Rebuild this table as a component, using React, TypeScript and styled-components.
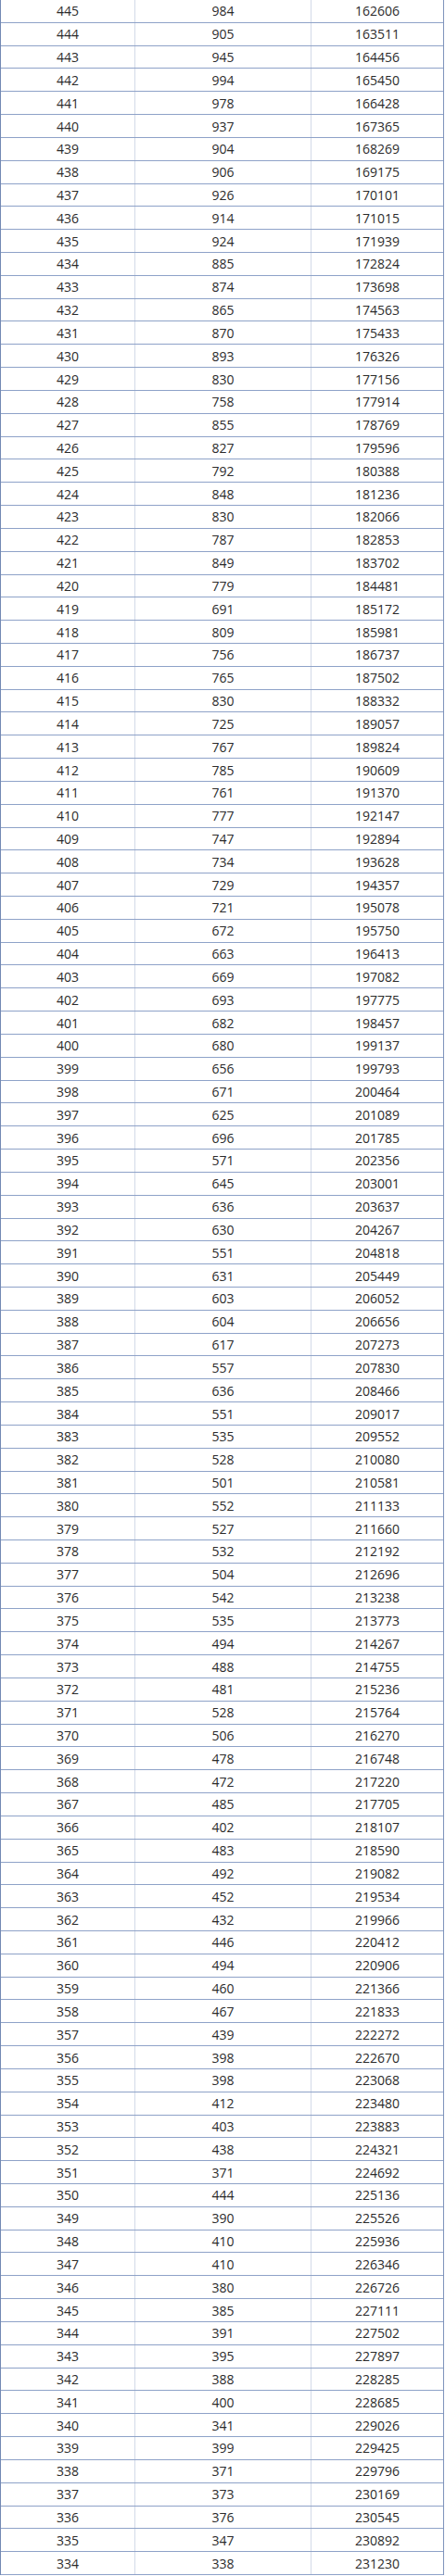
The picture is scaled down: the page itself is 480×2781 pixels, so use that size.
import React from 'react';
import styled, { createGlobalStyle } from 'styled-components';

const GlobalStyle = createGlobalStyle`
  html, body {
    margin: 0;
    padding: 0;
    background: #ffffff;
  }
`;

// admitted count per score, starting at 445 and going down to 334
const counts = [
  984, 905, 945, 994, 978, 937, 904, 906, 926, 914, 924, 885, 874, 865, 870, 893,
  830, 758, 855, 827, 792, 848, 830, 787, 849, 779, 691, 809, 756, 765, 830, 725,
  767, 785, 761, 777, 747, 734, 729, 721, 672, 663, 669, 693, 682, 680, 656, 671,
  625, 696, 571, 645, 636, 630, 551, 631, 603, 604, 617, 557, 636, 551, 535, 528,
  501, 552, 527, 532, 504, 542, 535, 494, 488, 481, 528, 506, 478, 472, 485, 402,
  483, 492, 452, 432, 446, 494, 460, 467, 439, 398, 398, 412, 403, 438, 371, 444,
  390, 410, 410, 380, 385, 391, 395, 388, 400, 341, 399, 371, 373, 376, 347, 338,
];

const rows = counts.reduce<{ score: number; count: number; total: number }[]>(
  (acc, count, i) => {
    const prev = i === 0 ? 162606 - count : acc[i - 1].total;
    acc.push({ score: 445 - i, count, total: prev + count });
    return acc;
  },
  []
);

const Table = styled.div`
  width: 479px;
  height: 2780px;
  box-sizing: border-box;
  border-left: 1px solid #7389b3;
  border-right: 1px solid #7e93bb;
  display: grid;
  grid-template-rows: repeat(${rows.length}, 1fr);
  font-family: 'Open Sans', 'Noto Sans', sans-serif;
  font-size: 14px;
  color: #2b2b2b;
`;

const Row = styled.div`
  display: grid;
  grid-template-columns: 145px 190px 1fr;
  border-bottom: 1px solid #8ea2c8;
  box-sizing: border-box;
`;

const Cell = styled.div<{ $last?: boolean }>`
  display: flex;
  align-items: center;
  justify-content: center;
  border-right: ${(p) => (p.$last ? 'none' : '1px solid #d3dae8')};
  line-height: 1;
  padding-top: 1px;
`;

export default function App() {
  return (
    <>
      <GlobalStyle />
      <Table>
        {rows.map((r) => (
          <Row key={r.score}>
            <Cell>{r.score}</Cell>
            <Cell>{r.count}</Cell>
            <Cell $last>{r.total}</Cell>
          </Row>
        ))}
      </Table>
    </>
  );
}
